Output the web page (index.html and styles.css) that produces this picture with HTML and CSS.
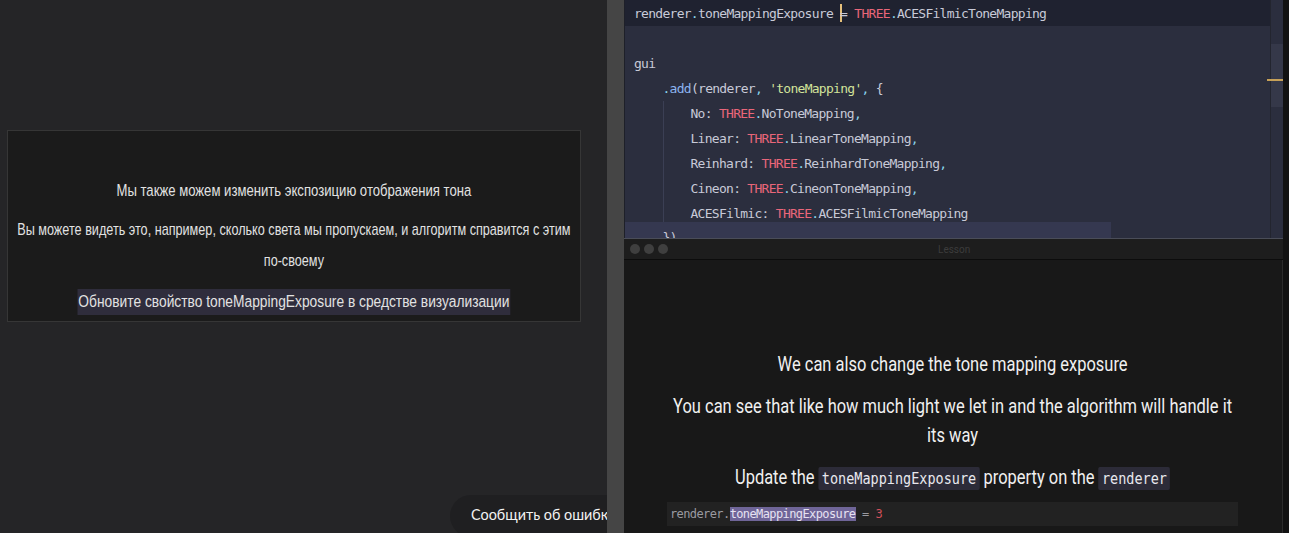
FILE: index.html
```html
<!DOCTYPE html>
<html lang="ru">
<head>
<meta charset="utf-8">
<link rel="stylesheet" href="styles.css">
</head>
<body>
<div class="screen">
  <section class="page">
    <div class="card">
      <p class="t1">Мы также можем изменить экспозицию отображения тона</p>
      <p class="t2">Вы можете видеть это, например, сколько света мы пропускаем, и алгоритм справится с этим по&#8209;своему</p>
      <p class="t3"><span class="mark">Обновите свойство toneMappingExposure в средстве визуализации</span></p>
    </div>
    <button class="report">Сообщить об ошибке</button>
  </section>
  <div class="strip"></div>
  <section class="video">
    <div class="editor">
      <div class="code">
        <div class="row first">renderer<span class="p">.</span>toneMappingExposure <span class="cursor"></span>= <span class="k">THREE</span><span class="p">.</span>ACESFilmicToneMapping</div>
        <div class="row"></div>
        <div class="row">gui</div>
        <div class="row ind1"><span class="p">.</span><span class="f">add</span>(renderer<span class="p">,</span> <span class="s">'toneMapping'</span><span class="p">,</span> {</div>
        <div class="block">
          <div class="row">No: <span class="k">THREE</span><span class="p">.</span>NoToneMapping<span class="p">,</span></div>
          <div class="row">Linear: <span class="k">THREE</span><span class="p">.</span>LinearToneMapping<span class="p">,</span></div>
          <div class="row">Reinhard: <span class="k">THREE</span><span class="p">.</span>ReinhardToneMapping<span class="p">,</span></div>
          <div class="row">Cineon: <span class="k">THREE</span><span class="p">.</span>CineonToneMapping<span class="p">,</span></div>
          <div class="row">ACESFilmic: <span class="k">THREE</span><span class="p">.</span>ACESFilmicToneMapping</div>
        </div>
        <div class="row ind1 cur">})</div>
      </div>
      <div class="scroll"><div class="thumb"><span class="tick"></span></div></div>
    </div>
    <div class="titlebar">
      <span class="dots"><i></i><i></i><i></i></span>
      <span class="wtitle">Lesson</span>
    </div>
    <div class="lesson">
      <p class="l1">We can also change the tone mapping exposure</p>
      <p class="l2">You can see that like how much light we let in and the algorithm will handle it its way</p>
      <p class="l3">Update the <code>toneMappingExposure</code> property on the <code>renderer</code></p>
      <pre class="snippet">renderer.<span class="sel">toneMappingExposure</span> = <span class="num">3</span></pre>
    </div>
  </section>
</div>
</body>
</html>
```
FILE: styles.css
```css
* { box-sizing: border-box; }
html, body { margin: 0; height: 100%; }
body { background: #252527; overflow: hidden; }
.screen { display: flex; height: 533px; width: 1289px; overflow: hidden; }

/* ---- left page ---- */
.page {
  width: 607px; flex: none; position: relative; overflow: hidden;
  background: #252527; padding-top: 130px; padding-left: 7px;
}
.card {
  width: 574px; height: 192px; background: #1b1b1b; border: 1px solid #363636;
  padding: 47px 5px 0; text-align: center; overflow: hidden;
  font-family: "Liberation Sans", Arial, sans-serif;
  color: #e2e2e2;
}
.card p {
  margin: 0; width: 697px; transform: scaleX(0.806); transform-origin: 0 0;
}
.t1 { font-size: 16.3px; line-height: 24px; }
.t2 { font-size: 15.7px; line-height: 31px; margin-top: 12px !important; }
.t3 { font-size: 17.1px; line-height: 26px; margin-top: 13px !important; }
.mark { background: #2f2d3c; padding: 0 1px; display: inline-block; }

.report {
  position: absolute; left: 450px; top: 495px; height: 42px; width: 200px;
  border: 0; border-radius: 21px; background: #1f1f21; color: #f2f2f2;
  font-family: "Lato", "Open Sans", sans-serif; font-size: 14.4px; text-align: left;
  padding: 0 0 4px 21px; white-space: nowrap;
}

.strip { width: 17px; flex: none; background: #454545; }

/* ---- right video ---- */
.video {
  width: 665px; min-width: 0; flex: none; display: flex; flex-direction: column;
  background: #141414; border-right: 6px solid #121212; overflow: hidden;
}

.editor { height: 238px; flex: none; background: #2b2e3e; display: flex; border-left: 1px solid #1e2029; }
.code {
  flex: 1; min-width: 0; padding-left: 9px; overflow: hidden;
  font-family: "DejaVu Sans Mono", monospace; font-size: 13px; letter-spacing: -0.72px;
  color: #c8cad8;
}
.row { height: 25px; line-height: 25px; white-space: pre; }
.row.first { height: 26px; line-height: 27px; margin-left: -9px; padding-left: 9px; background: #1f2230; }
.ind1 { padding-left: 28.5px; }
.block { margin-left: 28.5px; border-left: 1px solid #3b3f54; padding-left: 27px; }
.row.cur { margin-left: -9px; padding-left: 37.5px; width: 486px; margin-top: -4px; background: #353850; line-height: 32px; height: 17px; overflow: hidden; }
.k { color: #e9667a; }
.p { color: #89d4ec; }
.f { color: #8cb4f0; }
.s { color: #d2e39a; }
.cursor { display: inline-block; width: 2px; height: 18px; background: #e5c07b; vertical-align: -4px; margin-right: -2px; }

.scroll { width: 13px; flex: none; border-left: 1px solid #23252f; background: #2b2e3e; padding-top: 44px; }
.thumb { height: 63px; background: #353849; position: relative; }
.tick { position: absolute; left: -4px; right: 0; top: 35px; height: 2px; background: #c7a158; }

.titlebar {
  height: 22px; flex: none; background: #1d1d1d; border-top: 1px solid #4a4d58; border-bottom: 1px solid #0c0c0c;
  display: flex; align-items: center; position: relative;
}
.dots { display: flex; gap: 4px; padding-left: 6px; }
.dots i { width: 10px; height: 10px; border-radius: 50%; background: #3f3f3f; display: block; }
.wtitle { position: absolute; left: 314px; font-family: "Roboto", sans-serif; font-size: 10px; color: #3c3c3c; }

.lesson {
  flex: 1; background: #181818; text-align: center; padding: 90px 44px 0 43px;
  font-family: "Roboto", sans-serif; color: #f0f0f0;
  border-right: 1px solid #2c2c2c; overflow: hidden;
}
.lesson p {
  margin: 0; width: 694px; font-size: 20px;
  transform: scaleX(0.823); transform-origin: 0 0;
}
.l1 { line-height: 28px; }
.l2 { line-height: 29px; margin-top: 14px !important; }
.l3 { line-height: 30px; margin-top: 12px !important; }
.l3 code {
  font-family: "DejaVu Sans Mono", monospace; font-size: 16.4px;
  background: #2c2b38; color: #e8e8ee; padding: 2px 4px; border-radius: 2px;
}
.snippet {
  margin: 8px 0 0; background: #222222; text-align: left; height: 24px; line-height: 24px;
  font-family: "DejaVu Sans Mono", monospace; font-size: 12px; letter-spacing: -0.6px;
  color: #9a9aa0; padding-left: 3px;
}
.sel { background: #6f6598; color: #e6e2f2; }
.num { color: #d0505a; }
```
